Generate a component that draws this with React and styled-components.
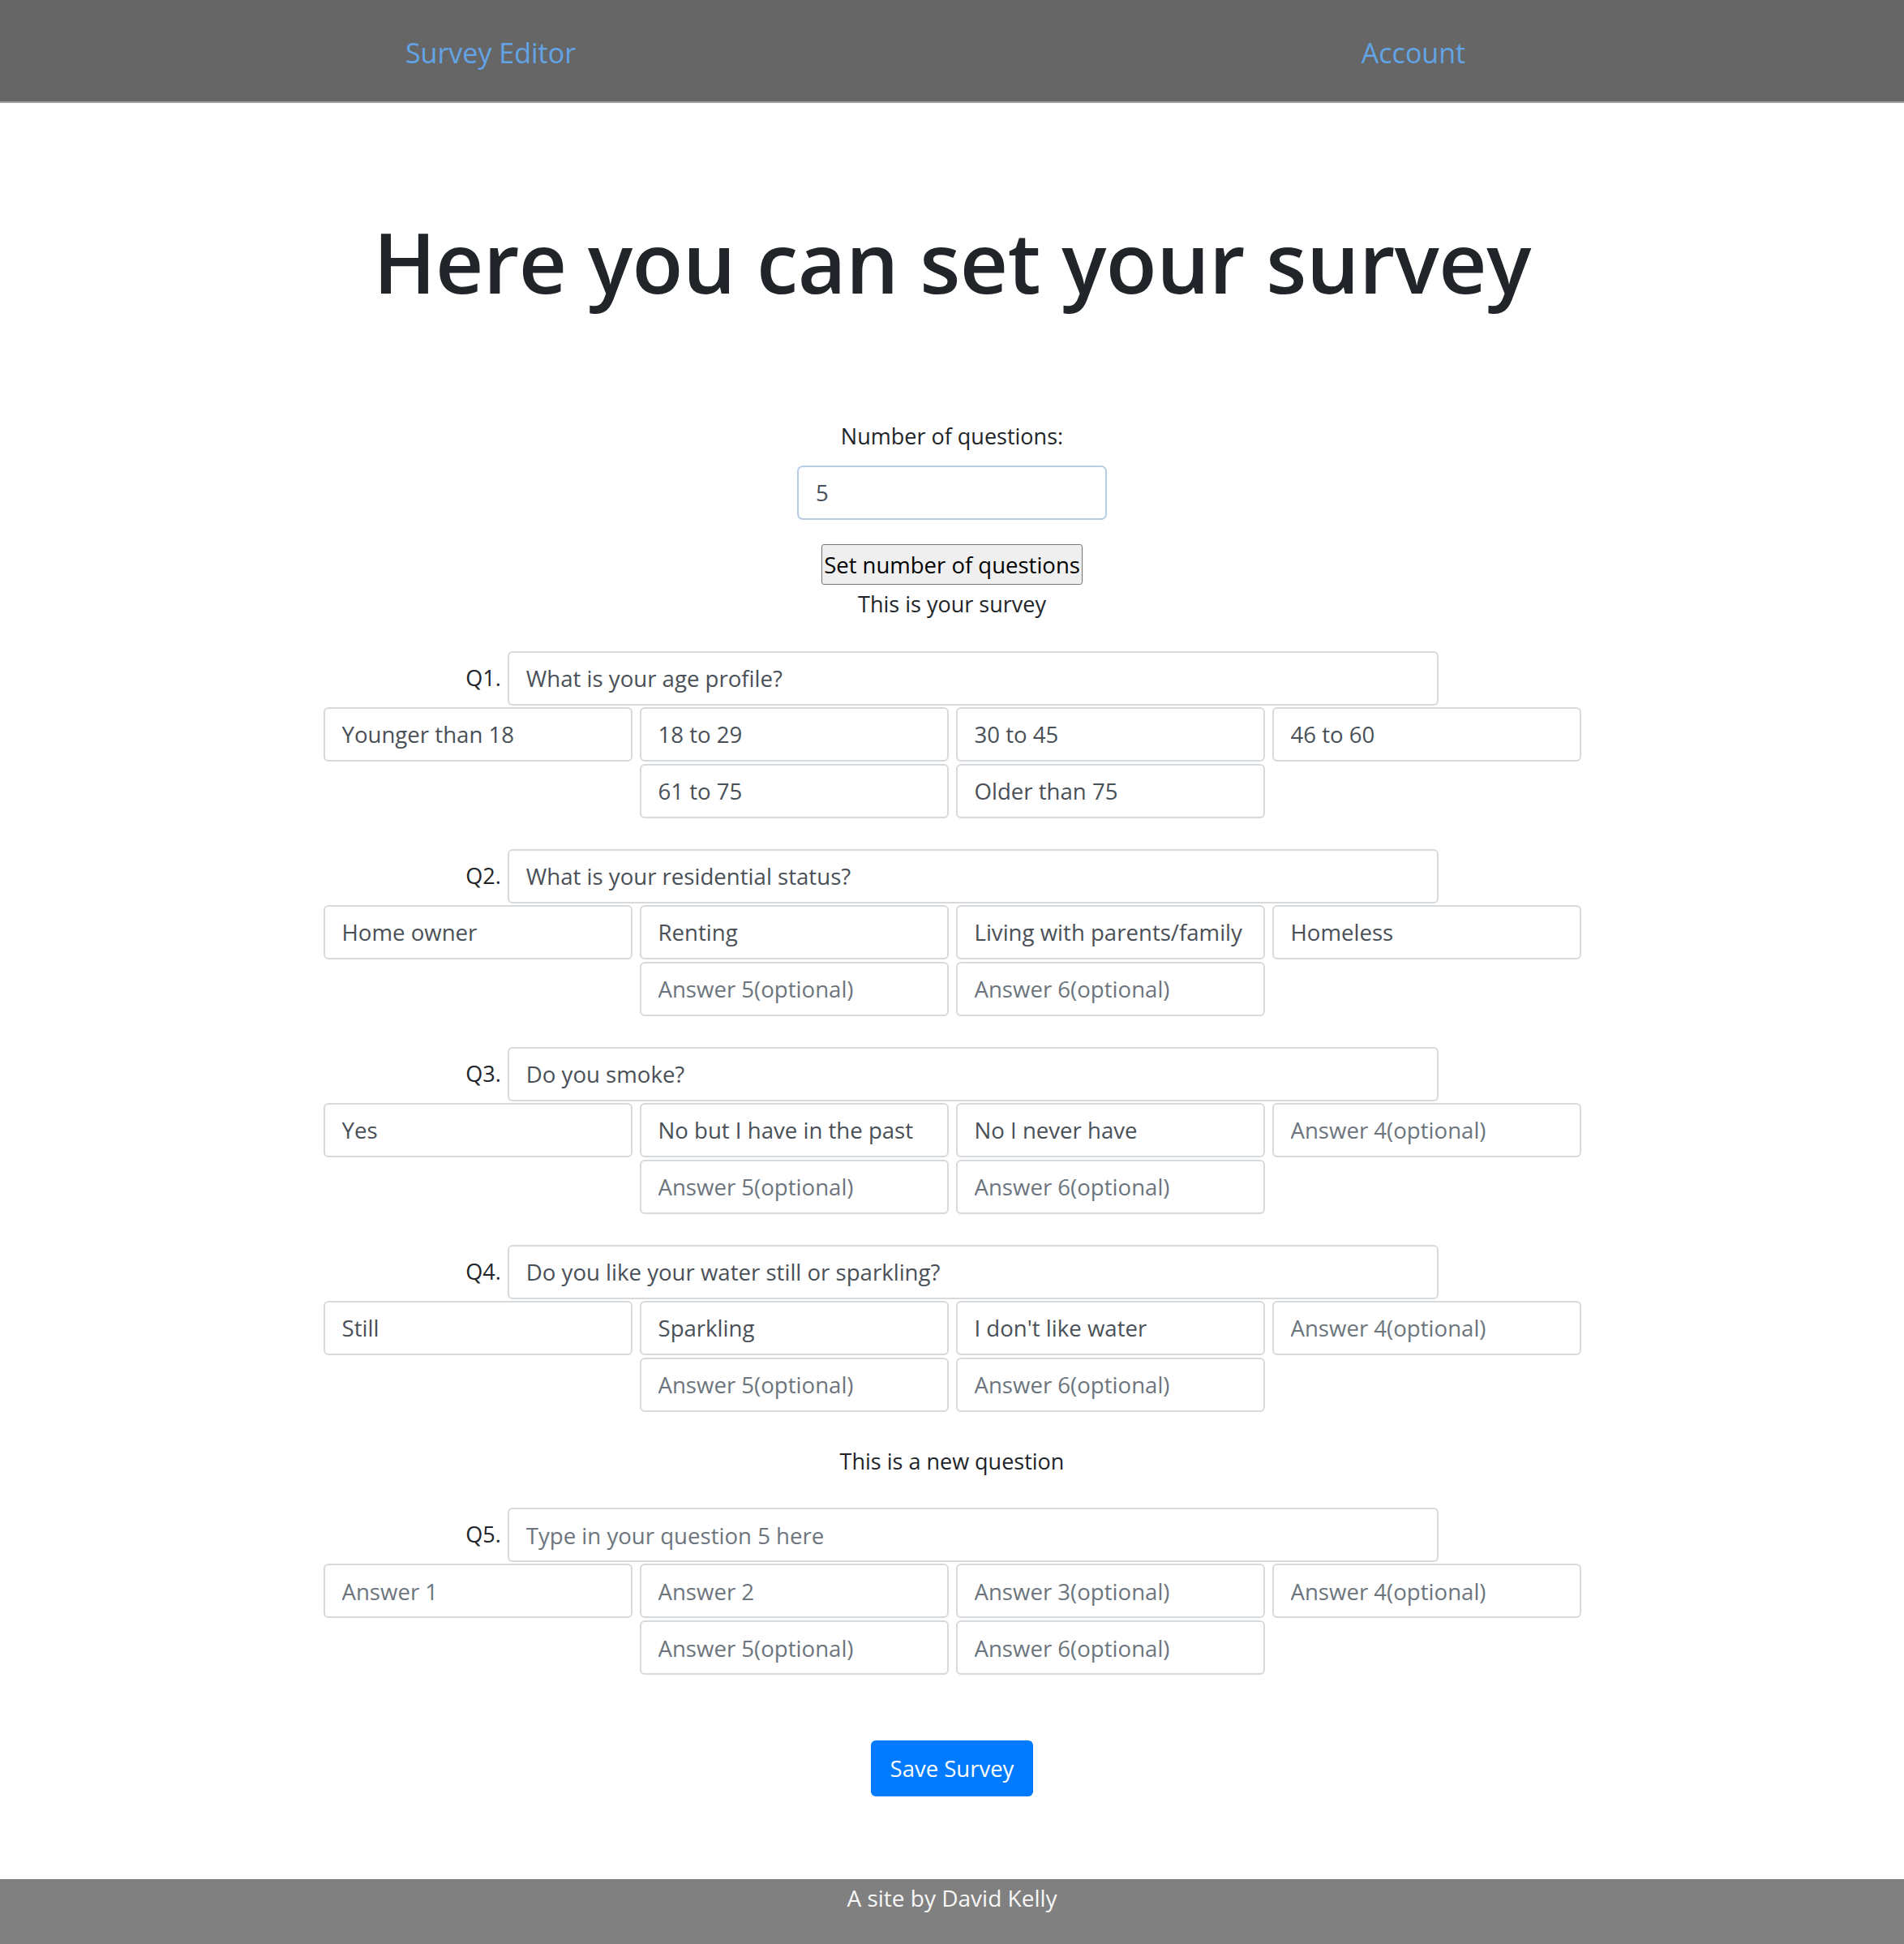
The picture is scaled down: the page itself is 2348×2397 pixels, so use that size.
import React from "react";
import styled, { createGlobalStyle } from "styled-components";

const GlobalStyle = createGlobalStyle`
  html, body {
    margin: 0;
    padding: 0;
    background: #fff;
  }
  body {
    font-family: "Open Sans", "Noto Sans", sans-serif;
    font-size: 27px;
    line-height: 1.5;
    color: #212529;
  }
  * {
    box-sizing: border-box;
  }
`;

const questions = [
  {
    text: "What is your age profile?",
    answers: ["Younger than 18", "18 to 29", "30 to 45", "46 to 60", "61 to 75", "Older than 75"],
  },
  {
    text: "What is your residential status?",
    answers: ["Home owner", "Renting", "Living with parents/family", "Homeless", "", ""],
  },
  {
    text: "Do you smoke?",
    answers: ["Yes", "No but I have in the past", "No I never have", "", "", ""],
  },
  {
    text: "Do you like your water still or sparkling?",
    answers: ["Still", "Sparkling", "I don't like water", "", "", ""],
  },
];

const answerPlaceholder = (i) =>
  i < 2 ? `Answer ${i + 1}` : `Answer ${i + 1}(optional)`;

const QuestionBlock = ({ number, question }) => (
  <Block>
    <QuestionRow>
      <QLabel>Q{number}.</QLabel>
      <QuestionInput
        type="text"
        defaultValue={question ? question.text : ""}
        placeholder={`Type in your question ${number} here`}
      />
    </QuestionRow>
    <Answers>
      {[0, 1, 2, 3, 4, 5].map((i) => (
        <AnswerInput
          key={i}
          type="text"
          defaultValue={question ? question.answers[i] : ""}
          placeholder={answerPlaceholder(i)}
        />
      ))}
    </Answers>
  </Block>
);

const App = () => {
  return (
    <Page>
      <GlobalStyle />
      <NavBar>
        <NavItem>
          <NavLink href="#">Survey Editor</NavLink>
        </NavItem>
        <NavItem>
          <NavLink href="#">Account</NavLink>
        </NavItem>
      </NavBar>

      <Main>
        <Title>Here you can set your survey</Title>

        <CountLabel>Number of questions:</CountLabel>
        <CountInput type="text" defaultValue="5" />
        <SetButton>Set number of questions</SetButton>
        <Caption>This is your survey</Caption>

        {questions.map((q, index) => (
          <QuestionBlock key={index} number={index + 1} question={q} />
        ))}

        <NewCaption>This is a new question</NewCaption>
        <QuestionBlock number={5} />

        <SaveButton>Save Survey</SaveButton>
      </Main>

      <Footer>A site by David Kelly</Footer>
    </Page>
  );
};

export default App;

// styled
const Page = styled.div`
  width: 100%;
  min-height: 2397px;
  display: flex;
  flex-direction: column;
`;

const NavBar = styled.nav`
  height: 127px;
  background: #666666;
  border-bottom: 2px solid #a3a3a3;
  display: grid;
  grid-template-columns: 1fr 1fr;
  width: 100%;
  padding: 0 36px;
`;

const NavItem = styled.div`
  display: flex;
  align-items: center;
  justify-content: center;
  padding-top: 6px;
`;

const NavLink = styled.a`
  font-size: 34px;
  color: #62a4e6;
  text-decoration: none;
`;

const Main = styled.main`
  display: flex;
  flex-direction: column;
  align-items: center;
  flex: 1;
`;

const Title = styled.h1`
  margin: 134px 0 0;
  font-size: 103px;
  font-weight: 600;
  line-height: 1.2;
  color: #212529;
  letter-spacing: -0.5px;
`;

const CountLabel = styled.div`
  margin-top: 133px;
`;

const CountInput = styled.input`
  margin-top: 16px;
  width: 382px;
  height: 67px;
  padding: 0 21px;
  font-family: inherit;
  font-size: 27.5px;
  color: #495057;
  border: 2px solid #b7cde6;
  border-radius: 7px;
  outline: none;
`;

const SetButton = styled.button`
  margin-top: 30px;
  height: 50px;
  padding: 0 2px;
  font-family: inherit;
  font-size: 27.5px;
  color: #000;
  background: #efefef;
  border: 1px solid #767676;
  border-radius: 3px;
`;

const Caption = styled.div`
  margin-top: 4px;
`;

const NewCaption = styled.div`
  margin-top: 41px;
`;

const Block = styled.section`
  margin-top: 37px;
  display: flex;
  flex-direction: column;
  align-items: center;
  gap: 2px;

  & + & {
    margin-top: 38px;
  }
`;

const QuestionRow = styled.div`
  display: flex;
  align-items: center;
  gap: 8px;
`;

const QLabel = styled.span`
  font-size: 27px;
  color: #212529;
`;

const baseInput = `
  height: 67px;
  padding: 0 21px;
  font-family: "Open Sans", "Noto Sans", sans-serif;
  font-size: 27.6px;
  color: #495057;
  background: #fff;
  border: 2px solid #d7dadd;
  border-radius: 6px;
  outline: none;

  &::placeholder {
    color: #6c757d;
    opacity: 1;
  }
`;

const QuestionInput = styled.input`
  ${baseInput}
  width: 1148px;
`;

const Answers = styled.div`
  width: 1560px;
  display: flex;
  flex-wrap: wrap;
  justify-content: center;
  column-gap: 9px;
  row-gap: 3px;
`;

const AnswerInput = styled.input`
  ${baseInput}
  width: 381px;
`;

const SaveButton = styled.button`
  margin-top: 81px;
  width: 200px;
  height: 69px;
  padding: 0;
  white-space: nowrap;
  font-family: inherit;
  font-size: 27.5px;
  color: #fff;
  background: #007bff;
  border: none;
  border-radius: 6px;
`;

const Footer = styled.footer`
  margin-top: 97px;
  height: 80px;
  padding-top: 2px;
  background: #808080;
  color: #f7f7f7;
  text-align: center;
  font-size: 28px;
`;
